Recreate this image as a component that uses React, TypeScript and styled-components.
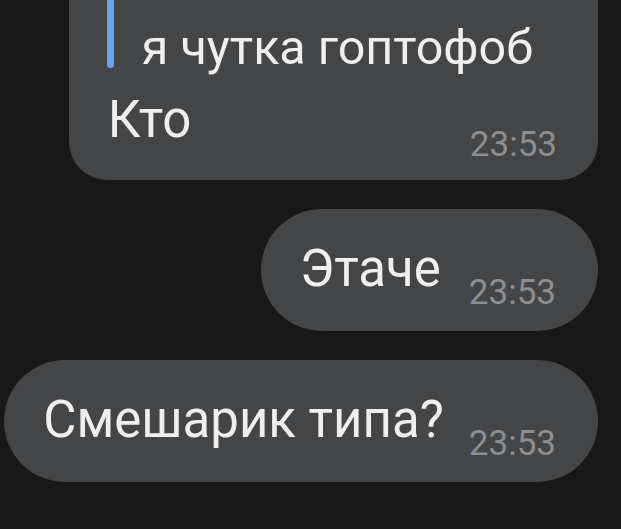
import React from "react";
import styled, { createGlobalStyle } from "styled-components";

const Global = createGlobalStyle`
  html, body {
    margin: 0;
    padding: 0;
    background: #181818;
  }
  body {
    font-family: Roboto, "Noto Sans", "Liberation Sans", sans-serif;
    overflow: hidden;
  }
`;

const Chat = styled.div`
  width: 621px;
  height: 529px;
  box-sizing: border-box;
  display: flex;
  flex-direction: column;
  align-items: flex-end;
  gap: 29px;
  padding-right: 23px;
  background: #181818;
`;

const Bubble = styled.div<{ $cut?: boolean }>`
  background: #444547;
  color: #eeeeee;
  box-sizing: border-box;
  display: flex;
  flex-direction: column;
  border-radius: ${(p) => (p.$cut ? "0 0 38px 38px" : "61px")};
  padding: ${(p) => (p.$cut ? "0 41px 15px 38px" : "30px 42px 18px 39px")};
`;

const Row = styled.div<{ $spread?: boolean; $gap?: number }>`
  display: flex;
  align-items: flex-start;
  justify-content: ${(p) => (p.$spread ? "space-between" : "flex-start")};
  gap: ${(p) => p.$gap ?? 28}px;
`;

const Text = styled.div`
  font-size: 51px;
  line-height: 60px;
  white-space: nowrap;
  color: #efefef;
`;

const Time = styled.div<{ $top: number }>`
  font-size: 35px;
  line-height: 40px;
  color: #8d8e90;
  margin-top: ${(p) => p.$top}px;
  white-space: nowrap;
`;

const Quote = styled.div`
  display: flex;
  align-items: stretch;
  height: 68px;
  padding-right: 24px;
`;

const QuoteBar = styled.div`
  width: 7px;
  background: #62a6ea;
  border-radius: 0 0 4px 4px;
  flex-shrink: 0;
`;

const QuoteText = styled.div`
  align-self: flex-end;
  margin-left: 28px;
  font-size: 48.5px;
  line-height: 40px;
  white-space: nowrap;
  color: #efefef;
`;

const ReplyRow = styled(Row)`
  margin-top: 22px;
  padding-left: 1px;
`;

export default function App() {
  return (
    <>
      <Global />
      <Chat>
        <Bubble $cut>
          <Quote>
            <QuoteBar />
            <QuoteText>я чутка гоптофоб</QuoteText>
          </Quote>
          <ReplyRow $spread>
            <Text>Кто</Text>
            <Time $top={35}>23:53</Time>
          </ReplyRow>
        </Bubble>
        <Bubble>
          <Row $gap={28}>
            <Text>Этаче</Text>
            <Time $top={34}>23:53</Time>
          </Row>
        </Bubble>
        <Bubble>
          <Row $gap={25}>
            <Text>Смешарик типа?</Text>
            <Time $top={34}>23:53</Time>
          </Row>
        </Bubble>
      </Chat>
    </>
  );
}
